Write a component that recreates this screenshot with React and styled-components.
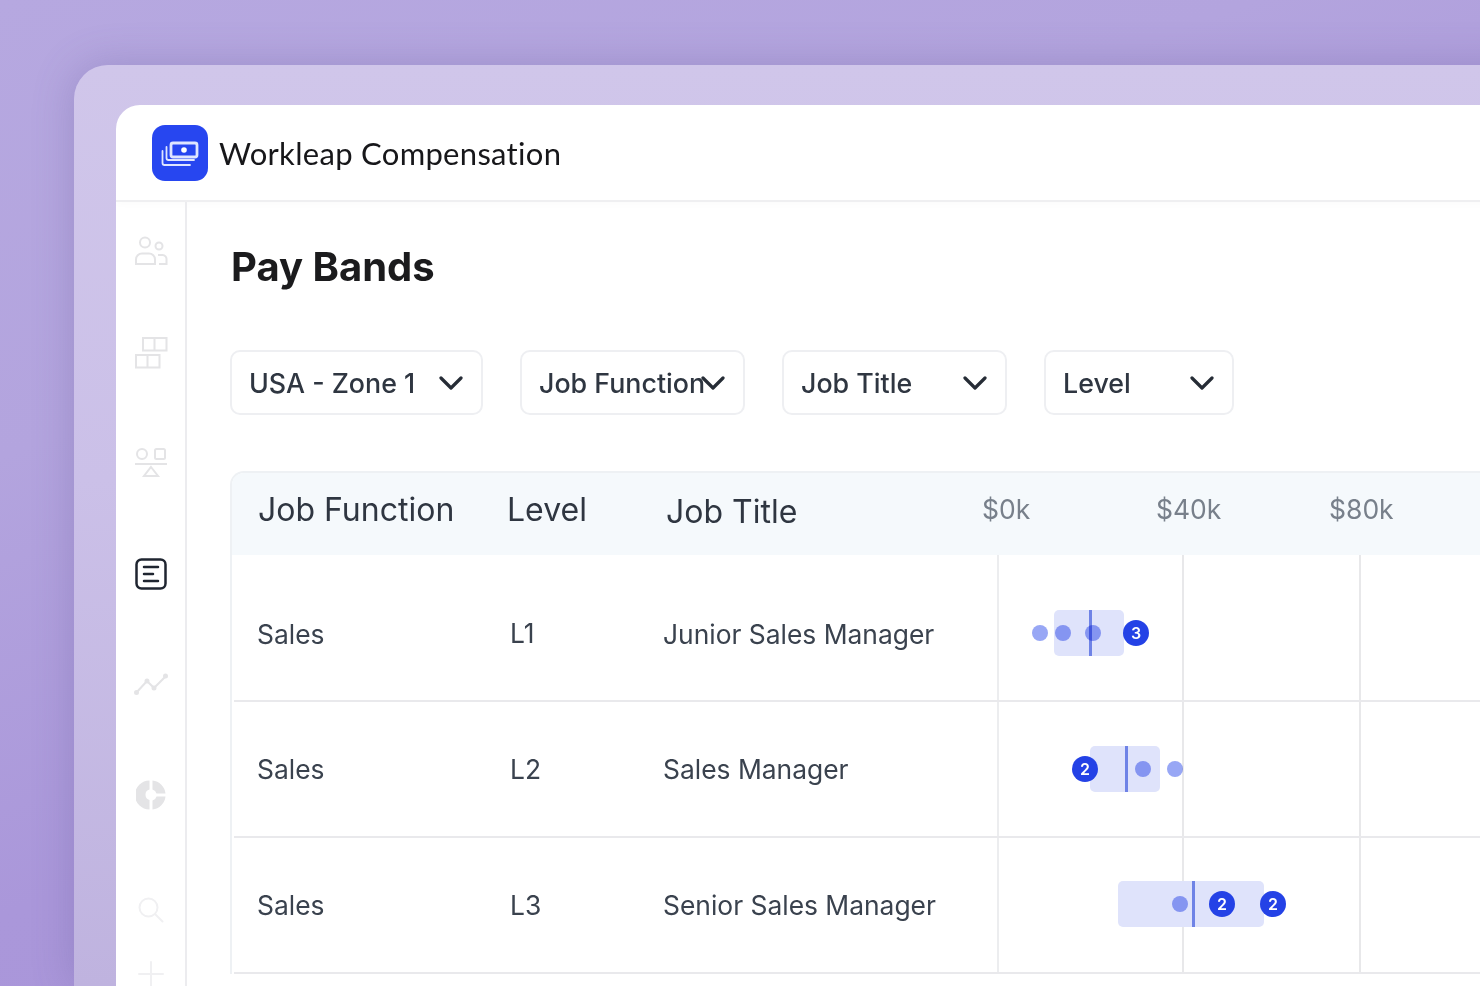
import React from 'react'
import styled, { createGlobalStyle } from 'styled-components'

const rows = [
  {
    fn: 'Sales', level: 'L1', title: 'Junior Sales Manager', height: 147, top: 12, chartTop: 14, nudge: -2,
    band: [56, 70], median: 92,
    dots: [42, 65, 95], badges: [{ x: 138, n: 3 }],
  },
  {
    fn: 'Sales', level: 'L2', title: 'Sales Manager', height: 136, top: 0, chartTop: 0, nudge: 0,
    band: [92, 70], median: 128,
    dots: [145, 177], badges: [{ x: 87, n: 2 }],
  },
  {
    fn: 'Sales', level: 'L3', title: 'Senior Sales Manager', height: 136, top: 0, chartTop: 0, nudge: -1,
    band: [120, 146], median: 195,
    dots: [182], badges: [{ x: 224, n: 2 }, { x: 275, n: 2 }],
  },
]

const filters = [
  { label: 'USA - Zone 1', width: 253 },
  { label: 'Job Function', width: 225 },
  { label: 'Job Title', width: 225 },
  { label: 'Level', width: 190 },
]

const PeopleIcon = () => (
  <svg width="34" height="30" viewBox="0 0 34 30" fill="none" stroke="currentColor" strokeWidth="2">
    <circle cx="11" cy="6.500" r="5" />
    <circle cx="25" cy="10" r="3.500" />
    <path d="M2 28v-4.500a6 6 0 0 1 6-6h7a6 6 0 0 1 6 6V28z" />
    <path d="M24 19h4.500a4 4 0 0 1 4 4.500V28H25" />
  </svg>
)

const GridIcon = () => (
  <svg width="34" height="34" viewBox="0 0 34 34" fill="none" stroke="currentColor" strokeWidth="2">
    <path d="M9 2h23.500v12.500H9zM20.500 2v12.500" />
    <path d="M2 19h23.500v12.500H2zM13.500 19v12.500" />
  </svg>
)

const BalanceIcon = () => (
  <svg width="34" height="32" viewBox="0 0 34 32" fill="none" stroke="currentColor" strokeWidth="2">
    <circle cx="8" cy="7" r="5" />
    <rect x="21" y="2" width="10" height="10" rx="1.500" />
    <path d="M1 17h32" />
    <path d="M17 20l7 9H10z" />
  </svg>
)

const ListIcon = () => (
  <svg width="32" height="32" viewBox="0 0 32 32" fill="none" stroke="currentColor" strokeWidth="2.500" strokeLinecap="round">
    <rect x="1.500" y="1.500" width="29" height="29" rx="5" />
    <path d="M9 9h14M9 16h9M9 23h14" />
  </svg>
)

const TrendIcon = () => (
  <svg width="34" height="22" viewBox="0 0 34 22" fill="none" stroke="currentColor" strokeWidth="2" strokeLinecap="round">
    <path d="M2 20l11-12 7 7L32 3" />
    <circle cx="2.500" cy="19.500" r="1.500" fill="currentColor" />
    <circle cx="13" cy="8" r="1.500" fill="currentColor" />
    <circle cx="20" cy="15" r="1.500" fill="currentColor" />
    <circle cx="31.500" cy="3" r="1.500" fill="currentColor" />
  </svg>
)

const PieIcon = () => (
  <svg width="30" height="30" viewBox="0 0 30 30" fill="currentColor">
    <path d="M13.500 0.500v9a5.500 5.500 0 0 0-4 5.500 5.500 5.500 0 0 0 4 5v9.500a14.500 14.500 0 0 1 0-29z" />
    <path d="M16.500 0.500a14.500 14.500 0 0 1 13 13h-9a5.500 5.500 0 0 0-4-4z" />
    <path d="M20.500 16.500h9a14.500 14.500 0 0 1-13 13v-9a5.500 5.500 0 0 0 4-4z" />
  </svg>
)

const SearchIcon = () => (
  <svg width="28" height="28" viewBox="0 0 28 28" fill="none" stroke="currentColor" strokeWidth="2" strokeLinecap="round">
    <circle cx="11.500" cy="11.500" r="9" />
    <path d="M18 18l7.500 7.500" />
  </svg>
)

const PlusIcon = () => (
  <svg width="28" height="28" viewBox="0 0 28 28" fill="none" stroke="currentColor" strokeWidth="2" strokeLinecap="round">
    <path d="M14 2v24M2 14h24" />
  </svg>
)

const Chevron = () => (
  <svg width="24" height="14" viewBox="0 0 24 14" fill="none" stroke="#262c36" strokeWidth="3.200" strokeLinecap="round" strokeLinejoin="round">
    <path d="M2 2l10 10L22 2" />
  </svg>
)

const BillsIcon = () => (
  <svg width="38" height="26" viewBox="0 0 38 26" fill="none" stroke="#dfe5ff" strokeWidth="1.800" strokeLinecap="round">
    <rect x="10" y="2" width="26" height="14" rx="2" strokeWidth="2.800" />
    <circle cx="23" cy="9" r="2.800" fill="#fff" stroke="none" />
    <path d="M5.500 6v11a2 2 0 0 0 2 2H33" />
    <path d="M1.500 10v12a2 2 0 0 0 2 2H29" />
  </svg>
)

const navItems = [
  { Icon: PeopleIcon, gap: 0 },
  { Icon: GridIcon, gap: 68 },
  { Icon: BalanceIcon, gap: 76 },
  { Icon: ListIcon, gap: 77, active: true },
  { Icon: TrendIcon, gap: 76 },
  { Icon: PieIcon, gap: 77 },
  { Icon: SearchIcon, gap: 81, faint: true },
  { Icon: PlusIcon, gap: 30, faint: true },
]

const App = () => (
  <Frame>
    <GlobalStyle />
    <Window>
      <Header>
        <Logo>
          <BillsIcon />
        </Logo>
        <Brand>Workleap Compensation</Brand>
      </Header>
      <Body>
        <Sidebar>
          {navItems.map(({ Icon, gap, active, faint }, i) => (
            <NavItem key={i} $gap={gap} $active={active} $faint={faint}>
              <Icon />
            </NavItem>
          ))}
        </Sidebar>
        <Main>
          <Title>Pay Bands</Title>
          <Filters>
            {filters.map((f) => (
              <Select key={f.label} $width={f.width}>
                <span>{f.label}</span>
                <Chevron />
              </Select>
            ))}
          </Filters>
          <Table>
            <HeadRow>
              <HeadCell>Job Function</HeadCell>
              <HeadCell>Level</HeadCell>
              <HeadCell $low>Job Title</HeadCell>
              <Scale>
                <span>$0k</span>
                <span>$40k</span>
                <span>$80k</span>
              </Scale>
            </HeadRow>
            {rows.map((r) => (
              <Row key={r.level} $height={r.height}>
                <Cell $top={r.top}>{r.fn}</Cell>
                <Cell $top={Math.max(r.top - 2, 0)}>{r.level}</Cell>
                <Cell $top={r.top}>{r.title}</Cell>
                <ChartCell $top={r.chartTop}>
                  <Marks $nudge={r.nudge}>
                    <Band style={{ left: r.band[0], width: r.band[1] }} />
                    <Median style={{ left: r.median }} />
                    {r.dots.map((x) => (
                      <Dot key={x} style={{ left: x }} />
                    ))}
                    {r.badges.map((b) => (
                      <Badge key={b.x} style={{ left: b.x }}>{b.n}</Badge>
                    ))}
                  </Marks>
                </ChartCell>
              </Row>
            ))}
          </Table>
        </Main>
      </Body>
    </Window>
  </Frame>
)

const GlobalStyle = createGlobalStyle`
  html, body {
    margin: 0;
    height: 986px;
    overflow: hidden;
    background: linear-gradient(160deg, #b6a8e0 0%, #b3a4de 30%, #aa97da 60%, #a894d8 100%);
  }
  * { box-sizing: border-box; }
`

const Frame = styled.div`
  margin: 65px -60px 0 74px;
  height: 921px;
  padding: 40px 0 0 42px;
  border-radius: 34px 0 0 0;
  background: linear-gradient(180deg, #d0c6ea 0%, #cbc0e8 45%, #bfb3df 100%);
  box-shadow: 0 0 40px rgba(95, 85, 150, 0.3);
  font-family: Inter, 'Liberation Sans', sans-serif;
`

const Window = styled.div`
  height: 100%;
  border-radius: 24px 0 0 0;
  background: #fff;
  overflow: hidden;
`

const Header = styled.header`
  height: 97px;
  display: flex;
  align-items: center;
  gap: 11px;
  padding-left: 36px;
  border-bottom: 2px solid #efeff1;
  box-shadow: 0 2px 8px rgba(0, 0, 0, 0.02);
`

const Logo = styled.div`
  width: 56px;
  height: 56px;
  padding-top: 3px;
  border-radius: 13px;
  background: #2746f0;
  display: flex;
  align-items: center;
  justify-content: center;
`

const Brand = styled.div`
  font-family: Lato, Inter, sans-serif;
  font-size: 31px;
  letter-spacing: 0.3px;
  color: #17171a;
`

const Body = styled.div`
  display: flex;
`

const Sidebar = styled.nav`
  flex: 0 0 71px;
  height: 800px;
  padding-top: 32px;
  border-right: 2px solid #ececef;
  display: flex;
  flex-direction: column;
  align-items: center;
`

const NavItem = styled.div`
  margin-top: ${(p) => p.$gap}px;
  height: 34px;
  display: flex;
  align-items: center;
  justify-content: center;
  color: ${(p) => (p.$active ? '#1f2530' : p.$faint ? '#f0f0f2' : '#e4e4e6')};
`

const Main = styled.main`
  flex: 1;
  padding: 40px 0 0 43px;
`

const Title = styled.h1`
  margin: 0 0 0 1px;
  font-size: 40px;
  line-height: 50px;
  font-weight: 700;
  color: #1b1b1d;
`

const Filters = styled.div`
  display: flex;
  gap: 37px;
  margin-top: 58px;
`

const Select = styled.div`
  width: ${(p) => p.$width}px;
  height: 65px;
  padding: 0 18px 0 17px;
  display: flex;
  align-items: center;
  border: 2px solid #eeeff2;
  border-radius: 10px;
  font-size: 26.8px;
  font-weight: 500;
  color: #2f3641;

  span {
    flex: 0 1 auto;
    min-width: 0;
    white-space: nowrap;
  }

  svg {
    flex: none;
    margin-left: auto;
  }
`

const Table = styled.section`
  margin-top: 56px;
  border: 2px solid #eef1f4;
  border-bottom: 0;
  border-right: 0;
  border-radius: 14px 0 0 0;
`

const HeadRow = styled.div`
  height: 82px;
  display: flex;
  align-items: center;
  padding: 0 0 10px 26px;
  background: #f5f9fc;
  border-radius: 12px 0 0 0;
`

const HeadCell = styled.div`
  flex: 0 0 ${(p) => (p.$low ? 316 : 0)}px;
  font-size: 32px;
  color: #2f3641;
  white-space: nowrap;
  padding-top: ${(p) => (p.$low ? 5 : 0)}px;

  &:nth-child(1) { flex-basis: 249px; }
  &:nth-child(2) { flex-basis: 159px; }
`

const Scale = styled.div`
  display: grid;
  grid-template-columns: 174px 173px 100px;
  font-size: 26.500px;
  color: #78808b;
`

const Row = styled.div`
  height: ${(p) => p.$height}px;
  margin-left: 2px;
  display: grid;
  grid-template-columns: 253px 153px 334px 1fr;
  padding-left: 23px;
  align-items: center;
  border-bottom: 2px solid #e9e9ec;
`

const Cell = styled.div`
  padding-top: ${(p) => p.$top}px;
  font-size: 26.400px;
  color: #3a424e;
  white-space: nowrap;
`

const ChartCell = styled.div`
  align-self: stretch;
  display: flex;
  align-items: center;
  padding-top: ${(p) => p.$top}px;
  border-left: 2px solid #ecedef;
  background:
    linear-gradient(#e8e8ea, #e8e8ea) 183px 0 / 2px 100% no-repeat,
    linear-gradient(#e8e8ea, #e8e8ea) 360px 0 / 2px 100% no-repeat;
`

const Marks = styled.div`
  position: relative;
  width: 100%;
  height: 0;
  margin: ${(p) => p.$nudge * 2}px 0 0 -1px;
`

const Band = styled.div`
  position: absolute;
  top: -23px;
  height: 46px;
  border-radius: 5px;
  background: #dfe3fb;
`

const Median = styled.div`
  position: absolute;
  top: -23px;
  width: 3px;
  height: 46px;
  margin-left: -1.5px;
  background: #6f83e6;
`

const Dot = styled.div`
  position: absolute;
  top: -8px;
  width: 16px;
  height: 16px;
  margin-left: -8px;
  border-radius: 50%;
  background: #98a7f5;
  mix-blend-mode: multiply;
`

const Badge = styled.div`
  position: absolute;
  top: -13px;
  width: 26px;
  height: 26px;
  margin-left: -13px;
  border-radius: 50%;
  background: #2442e6;
  color: #fff;
  font-size: 16px;
  font-weight: 600;
  line-height: 26px;
  text-align: center;
`

export default App
